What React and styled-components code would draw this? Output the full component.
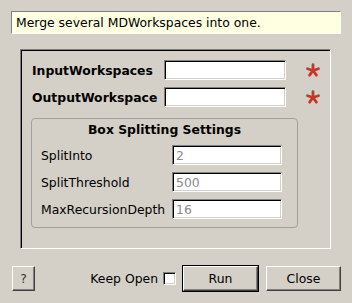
import React from "react";
import styled, { createGlobalStyle } from "styled-components";

const GlobalStyle = createGlobalStyle`
  html, body {
    margin: 0;
    padding: 0;
    background: #d4d0c8;
  }
  body {
    font-family: "DejaVu Sans", "Liberation Sans", sans-serif;
    font-size: 12.4px;
    color: #000;
  }
`;

const Dialog = styled.div`
  width: 352px;
  height: 303px;
  box-sizing: border-box;
  padding: 11px 11px 0 11px;
  display: flex;
  flex-direction: column;
`;

const Info = styled.div`
  height: 23px;
  box-sizing: border-box;
  background: #ffffe1;
  border: 1px solid;
  border-color: #808080 #fff #fff #808080;
  padding-left: 4px;
  display: flex;
  align-items: center;
`;

const Frame = styled.div`
  margin: 15px 0 0 9px;
  width: 311px;
  height: 200px;
  box-sizing: border-box;
  border: 1px solid;
  border-color: #808080 #fff #fff #808080;
  box-shadow: inset 1px 1px 0 #000, inset -1px -1px 0 #d4d0c8;
  padding: 10px 0 0 10px;
  display: flex;
  flex-direction: column;
`;

const Row = styled.div`
  display: flex;
  align-items: center;
  height: 20px;
  padding-left: ${(p) => p.$indent || 0}px;
  margin-top: ${(p) => p.$gap || 0}px;
`;

const Label = styled.div`
  width: ${(p) => p.$width}px;
  font-weight: ${(p) => (p.$bold ? "bold" : "normal")};
  white-space: nowrap;
`;

const Field = styled.div`
  width: ${(p) => p.$width}px;
  height: ${(p) => p.$height || 20}px;
  box-sizing: border-box;
  background: #fff;
  border: 1px solid;
  border-color: #808080 #fff #fff #808080;
  box-shadow: inset 1px 1px 0 #000, inset -1px -1px 0 #d4d0c8;
  color: #8a8a8a;
  padding-left: 3px;
  display: flex;
  align-items: center;
`;

const Star = styled.svg`
  margin-left: 19px;
  width: 16px;
  height: 16px;
`;

const Group = styled.div`
  margin-top: 11px;
  width: 267px;
  height: 110px;
  box-sizing: border-box;
  border: 1px solid #a0a0a0;
  border-radius: 4px;
  display: flex;
  flex-direction: column;
`;

const GroupTitle = styled.div`
  height: 22px;
  line-height: 22px;
  text-align: center;
  font-weight: bold;
  margin-bottom: 4px;
`;

const Bar = styled.div`
  margin-top: 16px;
  height: 27px;
  display: flex;
  align-items: center;
`;

const Button = styled.div`
  width: ${(p) => p.$width}px;
  height: 25px;
  box-sizing: border-box;
  border: 1px solid;
  border-color: #fff #404040 #404040 #fff;
  box-shadow: inset -1px -1px 0 #808080;
  display: flex;
  align-items: center;
  justify-content: center;
  color: ${(p) => p.$color || "#000"};
  margin-left: ${(p) => p.$ml || 0}px;
`;

const DefaultWrap = styled.div`
  border: 1px solid #000;
  margin-left: 6px;
  display: flex;
`;

const KeepOpen = styled.div`
  margin-left: auto;
  display: flex;
  align-items: center;
`;

const Check = styled.div`
  width: 13px;
  height: 13px;
  box-sizing: border-box;
  margin-left: 5px;
  background: #fff;
  border: 1px solid;
  border-color: #808080 #fff #fff #808080;
  box-shadow: inset 1px 1px 0 #000, inset -1px -1px 0 #d4d0c8;
`;

const Asterisk = () => (
  <Star viewBox="0 0 16 16">
    {[-90, -18, 54, 126, 198].map((a) => {
      const r = (a * Math.PI) / 180;
      return (
        <line
          key={a}
          x1="8"
          y1="8.5"
          x2={8 + Math.cos(r) * 5.8}
          y2={8.5 + Math.sin(r) * 5.8}
          stroke="#c0392b"
          strokeWidth="2.8"
          strokeLinecap="round"
        />
      );
    })}
  </Star>
);

const settings = [
  ["SplitInto", "2"],
  ["SplitThreshold", "500"],
  ["MaxRecursionDepth", "16"],
];

export default function App() {
  return (
    <>
      <GlobalStyle />
      <Dialog>
        <Info>Merge several MDWorkspaces into one.</Info>
        <Frame>
          <Row $indent={1}>
            <Label $width={132} $bold>InputWorkspaces</Label>
            <Field $width={122} />
            <Asterisk />
          </Row>
          <Row $indent={1} $gap={7}>
            <Label $width={132} $bold>OutputWorkspace</Label>
            <Field $width={122} />
            <Asterisk />
          </Row>
          <Group>
            <GroupTitle>Box Splitting Settings</GroupTitle>
            {settings.map(([name, value], i) => (
              <Row key={name} $indent={9} $gap={i ? 7 : 0}>
                <Label $width={131}>{name}</Label>
                <Field $width={110}>{value}</Field>
              </Row>
            ))}
          </Group>
        </Frame>
        <Bar>
          <Button $width={23} $ml={1} $color="#333">?</Button>
          <KeepOpen>
            Keep Open
            <Check />
          </KeepOpen>
          <DefaultWrap>
            <Button $width={75}>Run</Button>
          </DefaultWrap>
          <Button $width={75} $ml={7}>Close</Button>
        </Bar>
      </Dialog>
    </>
  );
}
